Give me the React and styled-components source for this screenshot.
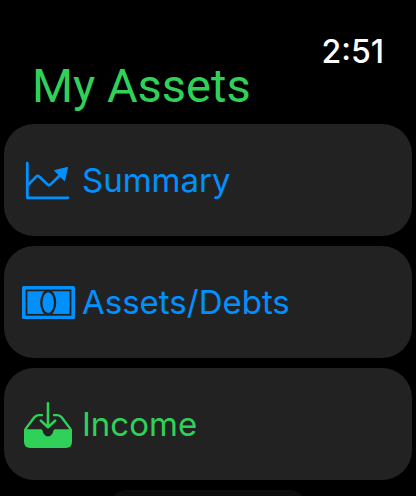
import styled, { createGlobalStyle, ThemeProvider } from "styled-components";

const theme = {
  colors: {
    green: "#30d158",
    blue: "#0091ff",
    card: "#222223",
  },
};

const App = () => {
  return (
    <ThemeProvider theme={theme}>
      <GlobalStyle />
      <Screen>
        <Header>
          <Title>My Assets</Title>
          <Time>2:51</Time>
        </Header>
        <List>
          <li>
            <Row type="button" $color="blue">
              <ChartIcon />
              Summary
            </Row>
          </li>
          <li>
            <Row type="button" $color="blue">
              <BanknoteIcon />
              Assets/Debts
            </Row>
          </li>
          <li>
            <Row type="button" $color="green">
              <TrayIcon />
              Income
            </Row>
          </li>
        </List>
        <NextRow />
      </Screen>
    </ThemeProvider>
  );
};

const ChartIcon = () => (
  <Icon viewBox="0 0 56 56" fill="none" stroke="currentColor" aria-hidden="true">
    <path
      d="M7.3 11.2V45.8H48"
      strokeWidth="2.8"
      strokeLinecap="round"
      strokeLinejoin="round"
    />
    <path
      d="M8 33L16.3 24.6Q17.7 23.2 19.1 24.6L27.6 32.6Q29 33.9 30.4 32.6L42 21.2"
      strokeWidth="2.7"
    />
    <path
      d="M47.4 15.6L34.8 18.5L44.5 28.4Z"
      fill="currentColor"
      strokeWidth="1.2"
      strokeLinejoin="round"
    />
  </Icon>
);

const BanknoteIcon = () => (
  <Icon viewBox="0 0 56 56" aria-hidden="true">
    <rect x="2" y="12" width="53" height="33" rx="1.5" fill="currentColor" />
    <g fill="none" stroke="#222223" strokeWidth="1.8">
      <rect x="6.5" y="16.4" width="44" height="24.4" />
      <ellipse cx="28.2" cy="28.6" rx="6.9" ry="11.6" strokeWidth="2.3" />
    </g>
  </Icon>
);

const TrayIcon = () => (
  <Icon viewBox="0 0 56 56" aria-hidden="true">
    <path
      d="M4 33.3H21.3Q22.2 33.3 22.5 34.6Q23.7 40.4 28 40.4Q32.3 40.4 33.5 34.6Q33.8 33.3 34.7 33.3H52V45.8Q52 52 45.8 52H10.2Q4 52 4 45.8Z"
      fill="currentColor"
    />
    <g
      fill="none"
      stroke="currentColor"
      strokeWidth="2.4"
      strokeLinecap="round"
      strokeLinejoin="round"
    >
      <path d="M22 19.1H18.6Q16 19.1 14.4 21.3L6 32.4Q5.2 33.6 5.2 35" />
      <path d="M34 19.1H37.4Q40 19.1 41.6 21.3L50 32.4Q50.8 33.6 50.8 35" />
      <path d="M28 7.2V31M20.8 24.6L28 31.2L35.2 24.6" strokeWidth="2.6" />
    </g>
  </Icon>
);

const GlobalStyle = createGlobalStyle`
  * {
    box-sizing: border-box;
  }

  body {
    margin: 0;
    background: #000;
    font-family: Inter, "Liberation Sans", sans-serif;
  }
`;

const Screen = styled.main`
  height: 100vh;
  padding: 0 4px;
  overflow: hidden;
`;

const Header = styled.header`
  display: flex;
  align-items: flex-start;
  justify-content: space-between;
  padding: 32px 28px 8px 28px;
`;

const Title = styled.h1`
  margin: 0;
  padding-top: 24px;
  color: ${({ theme }) => theme.colors.green};
  font-family: Roboto, sans-serif;
  font-size: 47px;
  font-weight: 400;
  line-height: 60px;
`;

const Time = styled.time`
  color: #fff;
  font-size: 32px;
  font-weight: 500;
  line-height: 40px;
`;

const List = styled.ul`
  display: flex;
  flex-direction: column;
  gap: 10px;
  margin: 0;
  padding: 0;
  list-style: none;
`;

const Row = styled.button`
  display: flex;
  align-items: center;
  gap: 6px;
  width: 100%;
  height: 112px;
  padding: 0 16px;
  border: 0;
  border-radius: 30px;
  background: ${({ theme }) => theme.colors.card};
  color: ${({ theme, $color }) => theme.colors[$color]};
  font-family: inherit;
  font-size: 33px;
  line-height: 40px;
  cursor: pointer;
`;

const Icon = styled.svg`
  flex: none;
  width: 56px;
  height: 56px;
`;

/* top edge of the row below the fold */
const NextRow = styled.div`
  width: 48%;
  height: 80px;
  margin: 10px auto 0;
  border-radius: 16px;
  background: #0c0c0c;
`;

export default App;
